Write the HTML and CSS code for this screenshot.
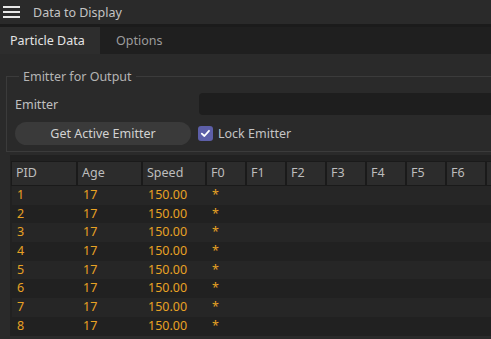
FILE: index.html
```html
<!DOCTYPE html>
<html lang="en">
  <head>
    <meta charset="utf-8">
    <title>Data to Display</title>
    <link rel="stylesheet" href="styles.css">
  </head>
  <body>
    <header class="titlebar">
      <svg class="menu" width="17" height="14" viewBox="0 0 17 14">
        <rect x="0" y="0" width="17" height="2" fill="#e6e6e6"/>
        <rect x="0" y="5" width="17" height="2" fill="#e6e6e6"/>
        <rect x="0" y="10" width="17" height="2" fill="#e6e6e6"/>
      </svg>
      <span class="title">Data to Display</span>
    </header>

    <nav class="tabs">
      <a class="tab active">Particle Data</a>
      <a class="tab">Options</a>
    </nav>

    <section class="panel">
      <fieldset class="group">
        <legend>Emitter for Output</legend>
        <div class="row">
          <label class="label">Emitter</label>
          <div class="field"></div>
        </div>
        <div class="row">
          <button class="button">Get Active Emitter</button>
          <label class="check">
            <span class="box">
              <svg width="15" height="15" viewBox="0 0 15 15">
                <path d="M3.8 7.6 L6.4 10 L11 4.8" fill="none" stroke="#fff" stroke-width="1.8" stroke-linecap="round" stroke-linejoin="round"/>
              </svg>
            </span>
            Lock Emitter
          </label>
        </div>
      </fieldset>

      <div class="table">
        <div class="thead">
          <div class="th">PID</div>
          <div class="th">Age</div>
          <div class="th">Speed</div>
          <div class="th">F0</div>
          <div class="th">F1</div>
          <div class="th">F2</div>
          <div class="th">F3</div>
          <div class="th">F4</div>
          <div class="th">F5</div>
          <div class="th">F6</div>
          <div class="th"></div>
        </div>
        <div class="tr"><div>1</div><div>17</div><div>150.00</div><div>*</div></div>
        <div class="tr"><div>2</div><div>17</div><div>150.00</div><div>*</div></div>
        <div class="tr"><div>3</div><div>17</div><div>150.00</div><div>*</div></div>
        <div class="tr"><div>4</div><div>17</div><div>150.00</div><div>*</div></div>
        <div class="tr"><div>5</div><div>17</div><div>150.00</div><div>*</div></div>
        <div class="tr"><div>6</div><div>17</div><div>150.00</div><div>*</div></div>
        <div class="tr"><div>7</div><div>17</div><div>150.00</div><div>*</div></div>
        <div class="tr"><div>8</div><div>17</div><div>150.00</div><div>*</div></div>
      </div>
    </section>
  </body>
</html>
```

FILE: styles.css
```css
body {
    margin: 0;
    background: #2a2a2a;
    color: #c8c8c8;
    font-size: 12px;
    font-family: "Noto Sans", "Open Sans", sans-serif;
    overflow: hidden;
}

.titlebar {
    display: flex;
    align-items: center;
    height: 24px;
    background: #2a2a2a;
    border-bottom: 3px solid #1b1b1b;
}

.titlebar .menu {
    margin-left: 3px;
    margin-top: 1px;
}

.titlebar .title {
    margin-left: 13px;
    font-size: 12.5px;
    color: #c4c4c4;
}

.tabs {
    display: flex;
    height: 27px;
    background: #1f1f1f;
}

.tab {
    display: flex;
    align-items: center;
    padding: 0 16px;
    white-space: nowrap;
    font-size: 12.5px;
    color: #9c9c9c;
}

.tab.active {
    box-sizing: border-box;
    width: 100px;
    padding-left: 10px;
    background: #2d2d2d;
    color: #e4e4e4;
}

.panel {
    padding-top: 14px;
}

.group {
    margin: 0 0 0 6px;
    padding: 8px 0 6px 8px;
    border: 1px solid #3b3b3b;
    border-right: none;
}

.group legend {
    padding: 0 4px;
    margin-left: 4px;
    color: #b4b4b4;
    font-size: 12.5px;
}

.row {
    display: flex;
    align-items: center;
}

.row + .row {
    margin-top: 7px;
}

.label {
    flex: 0 0 184px;
    color: #c0c0c0;
    font-size: 12.5px;
}

.field {
    flex: 1;
    height: 22px;
    background: #1e1e1e;
    border-radius: 4px 0 0 4px;
}

.button {
    width: 176px;
    height: 23px;
    margin: 0;
    padding: 0;
    border: none;
    border-radius: 12px;
    background: #3a3a3a;
    color: #d2d2d2;
    font-family: inherit;
    font-size: 12.5px;
}

.check {
    display: flex;
    align-items: center;
    margin-left: 7px;
    color: #c4c4c4;
    font-size: 12.5px;
}

.check .box {
    display: flex;
    width: 15px;
    height: 15px;
    margin-right: 5px;
    border-radius: 3px;
    background: #5d5fa8;
}

.table {
    margin: 3px 0 0 10px;
    background: #212121;
    overflow: hidden;
}

.thead {
    display: grid;
    grid-template-columns: 64px 63px 62px 38px 38px 38px 38px 38px 38px 38px 38px;
    gap: 2px;
    padding: 7px 0 1px 2px;
}

.th {
    height: 23px;
    line-height: 22px;
    padding-left: 4px;
    background: #2c2c2c;
    box-shadow: 0 0 0 1px #1a1a1a;
    color: #bdbdbd;
    font-size: 12.5px;
}

.tr {
    display: grid;
    grid-template-columns: 66px 65px 64px 40px;
    height: 18.7px;
    line-height: 18px;
    margin-left: 2px;
    color: #e8a224;
    font-size: 12.5px;
}

.tr div {
    padding-left: 5px;
}

.tr:nth-child(even) {
    background: #262626;
}
```
